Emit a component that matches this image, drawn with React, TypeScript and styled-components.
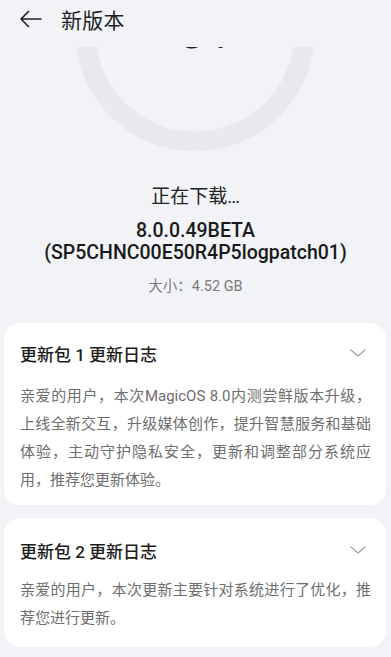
import React from "react";
import styled, { createGlobalStyle } from "styled-components";

const Global = createGlobalStyle`
  html, body { margin: 0; padding: 0; background: #f1f3f6; }
  body { font-family: Roboto, "Noto Sans CJK SC", sans-serif; -webkit-font-smoothing: antialiased; }
`;

const Page = styled.div`
  width: 391px;
  height: 657px;
  overflow: hidden;
  background: #f1f3f6;
  display: flex;
  flex-direction: column;
`;

const Header = styled.header`
  position: relative;
  z-index: 2;
  height: 47px;
  flex: 0 0 47px;
  background: #f1f3f6;
  display: flex;
  align-items: center;
  padding: 0 0 10px 19px;
  box-sizing: border-box;
  gap: 19px;
`;

const BackButton = styled.button`
  border: 0;
  background: none;
  padding: 0;
  width: 23px;
  height: 22px;
  display: flex;
  align-items: center;
  justify-content: center;
  color: #1f1f1f;
`;

const Title = styled.h1`
  margin: 0;
  font-size: 21px;
  font-weight: 400;
  color: #1f1f1f;
  letter-spacing: 0.3px;
`;

const Viewport = styled.main`
  flex: 1;
  overflow: hidden;
`;

const Scroll = styled.div`
  margin-top: -135px;
  display: flex;
  flex-direction: column;
  align-items: center;
`;

const Ring = styled.div`
  position: relative;
  width: 240px;
  height: 240px;
  margin-right: 2px;
`;

const Percent = styled.div`
  position: absolute;
  left: 12px;
  right: 0;
  top: 93px;
  display: flex;
  justify-content: center;
  align-items: baseline;
  color: #1a1a1a;
  font-weight: 700;
`;

const PercentNum = styled.span`
  font-size: 52px;
  line-height: 1;
`;

const PercentSign = styled.span`
  font-size: 18px;
  margin-left: 4px;
`;

const Status = styled.div`
  margin-top: 32px;
  font-size: 19px;
  line-height: 26px;
  color: #222;
`;

const Version = styled.div`
  margin-top: 10px;
  font-size: 19.5px;
  line-height: 22px;
  font-weight: 500;
  color: #1a1a1a;
  text-align: center;
`;

const Size = styled.div`
  margin-top: 13px;
  font-size: 14.5px;
  line-height: 20px;
  color: #7a7a7a;
`;

const Cards = styled.div`
  align-self: stretch;
  margin: 26px 5px 0 4px;
  display: flex;
  flex-direction: column;
  gap: 13px;
`;

const Card = styled.section<{ $top: number; $gap: number; $bottom: number }>`
  background: #fff;
  border-radius: 16px;
  padding: ${(p) => p.$top}px 15px ${(p) => p.$bottom}px 16px;
  display: flex;
  flex-direction: column;
  gap: ${(p) => p.$gap}px;
`;

const CardHead = styled.div`
  display: flex;
  align-items: center;
  justify-content: space-between;
  height: 24px;
`;

const CardTitle = styled.h2`
  margin: 0;
  font-size: 17px;
  font-weight: 500;
  color: #1c1c1c;
`;

const Chevron = styled.svg`
  width: 16px;
  height: 8px;
  margin-right: 5px;
`;

const CardBody = styled.p`
  margin: 0;
  font-size: 15px;
  line-height: 28px;
  color: #6e6e6e;
  text-align: justify;
`;

const ChevronDown = () => (
  <Chevron viewBox="0 0 16 8" fill="none">
    <path d="M1 1l7 6 7-6" stroke="#a3a3a3" strokeWidth="1.3" strokeLinecap="round" strokeLinejoin="round" />
  </Chevron>
);

const notes = [
  {
    title: "更新包 1 更新日志",
    body: "亲爱的用户，本次MagicOS 8.0内测尝鲜版本升级，上线全新交互，升级媒体创作，提升智慧服务和基础体验，主动守护隐私安全，更新和调整部分系统应用，推荐您更新体验。",
    top: 18,
    gap: 17,
    bottom: 11,
  },
  {
    title: "更新包 2 更新日志",
    body: "亲爱的用户，本次更新主要针对系统进行了优化，推荐您进行更新。",
    top: 20,
    gap: 14,
    bottom: 15,
  },
];

export default function App() {
  return (
    <Page>
      <Global />
      <Header>
        <BackButton aria-label="返回">
          <svg width="23" height="18" viewBox="0 0 23 18" fill="none">
            <path d="M22 9H2M9.5 1.5L2 9l7.5 7.5" stroke="#1f1f1f" strokeWidth="1.6" strokeLinecap="round" strokeLinejoin="round" />
          </svg>
        </BackButton>
        <Title>新版本</Title>
      </Header>
      <Viewport>
        <Scroll>
          <Ring>
            <svg width="240" height="240" viewBox="0 0 240 240">
              <circle cx="120" cy="120" r="109.5" fill="none" stroke="#e8e9ec" strokeWidth="20" />
            </svg>
            <Percent>
              <PercentNum>0</PercentNum>
              <PercentSign>%</PercentSign>
            </Percent>
          </Ring>
          <Status>正在下载…</Status>
          <Version>
            8.0.0.49BETA
            <br />
            (SP5CHNC00E50R4P5logpatch01)
          </Version>
          <Size>大小：4.52 GB</Size>
          <Cards>
            {notes.map((n) => (
              <Card key={n.title} $top={n.top} $gap={n.gap} $bottom={n.bottom}>
                <CardHead>
                  <CardTitle>{n.title}</CardTitle>
                  <ChevronDown />
                </CardHead>
                <CardBody>{n.body}</CardBody>
              </Card>
            ))}
          </Cards>
        </Scroll>
      </Viewport>
    </Page>
  );
}
